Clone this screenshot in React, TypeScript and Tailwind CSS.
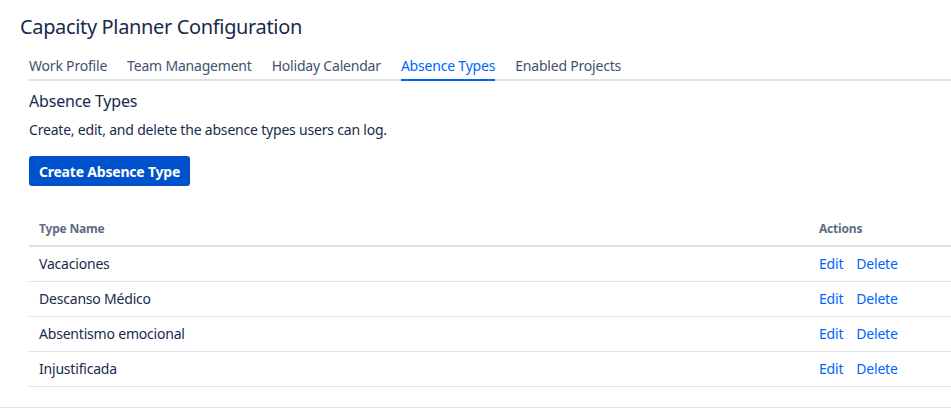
import React from 'react';

const tabs = ['Work Profile', 'Team Management', 'Holiday Calendar', 'Absence Types', 'Enabled Projects'];
const absenceTypes = ['Vacaciones', 'Descanso Médico', 'Absentismo emocional', 'Injustificada'];

const App: React.FC = () => {
  return (
    <div
      className="w-[951px] h-[410px] bg-white text-[#172b4d] overflow-hidden"
      style={{ fontFamily: '"Noto Sans", "Open Sans", sans-serif' }}
    >
      {/* Page title */}
      <h1 className="pl-[20px] pt-[12px] text-[20px] leading-[30px] font-normal tracking-[-0.35px]">
        Capacity Planner Configuration
      </h1>

      {/* Tabs */}
      <div className="ml-[29px] mt-[14px] flex gap-[20px] border-b-2 border-[#dfe1e6] text-[14px] leading-[20px]">
        {tabs.map((tab) => (
          <div
            key={tab}
            className={
              tab === 'Absence Types'
                ? 'pb-[3px] -mb-[2px] border-b-2 border-[#0065ff] text-[#0065ff] tracking-[-0.2px]'
                : 'pb-[3px] text-[#42526e] tracking-[-0.2px]'
            }
          >
            {tab}
          </div>
        ))}
      </div>

      {/* Content */}
      <div className="pl-[29px]">
        <h2 className="mt-[8px] text-[16px] leading-[24px] font-normal tracking-[-0.2px]">Absence Types</h2>
        <p className="mt-[7px] text-[14px] leading-[20px] tracking-[-0.2px]">
          Create, edit, and delete the absence types users can log.
        </p>
        <button className="mt-[16px] h-[30px] w-[161px] rounded-[3px] bg-[#0052cc] text-white text-[14px] font-bold tracking-[-0.2px]">
          Create Absence Type
        </button>

        {/* Table */}
        <table className="mt-[29px] w-[960px] border-collapse text-left">
          <thead>
            <tr className="border-b-2 border-[#dfe1e6]">
              <th className="pl-[10px] pt-[6px] pb-[8px] text-[12px] leading-[16px] font-bold text-[#5e6c84] tracking-[-0.2px]">
                Type Name
              </th>
              <th className="w-[180px] pl-[10px] pt-[6px] pb-[8px] text-[12px] leading-[16px] font-bold text-[#5e6c84] tracking-[-0.2px]">
                Actions
              </th>
            </tr>
          </thead>
          <tbody>
            {absenceTypes.map((name) => (
              <tr key={name} className="border-b border-[#dfe1e6] h-[35px]">
                <td className="pl-[10px] text-[14px] leading-[20px] tracking-[-0.2px]">{name}</td>
                <td className="pl-[10px] text-[14px] leading-[20px] text-[#0065ff] tracking-[-0.2px]">
                  <span className="mr-[13px]">Edit</span>
                  <span>Delete</span>
                </td>
              </tr>
            ))}
          </tbody>
        </table>
      </div>

      <div className="mt-[20px] border-t border-[#dfe1e6]" />
    </div>
  );
};

export default App;
